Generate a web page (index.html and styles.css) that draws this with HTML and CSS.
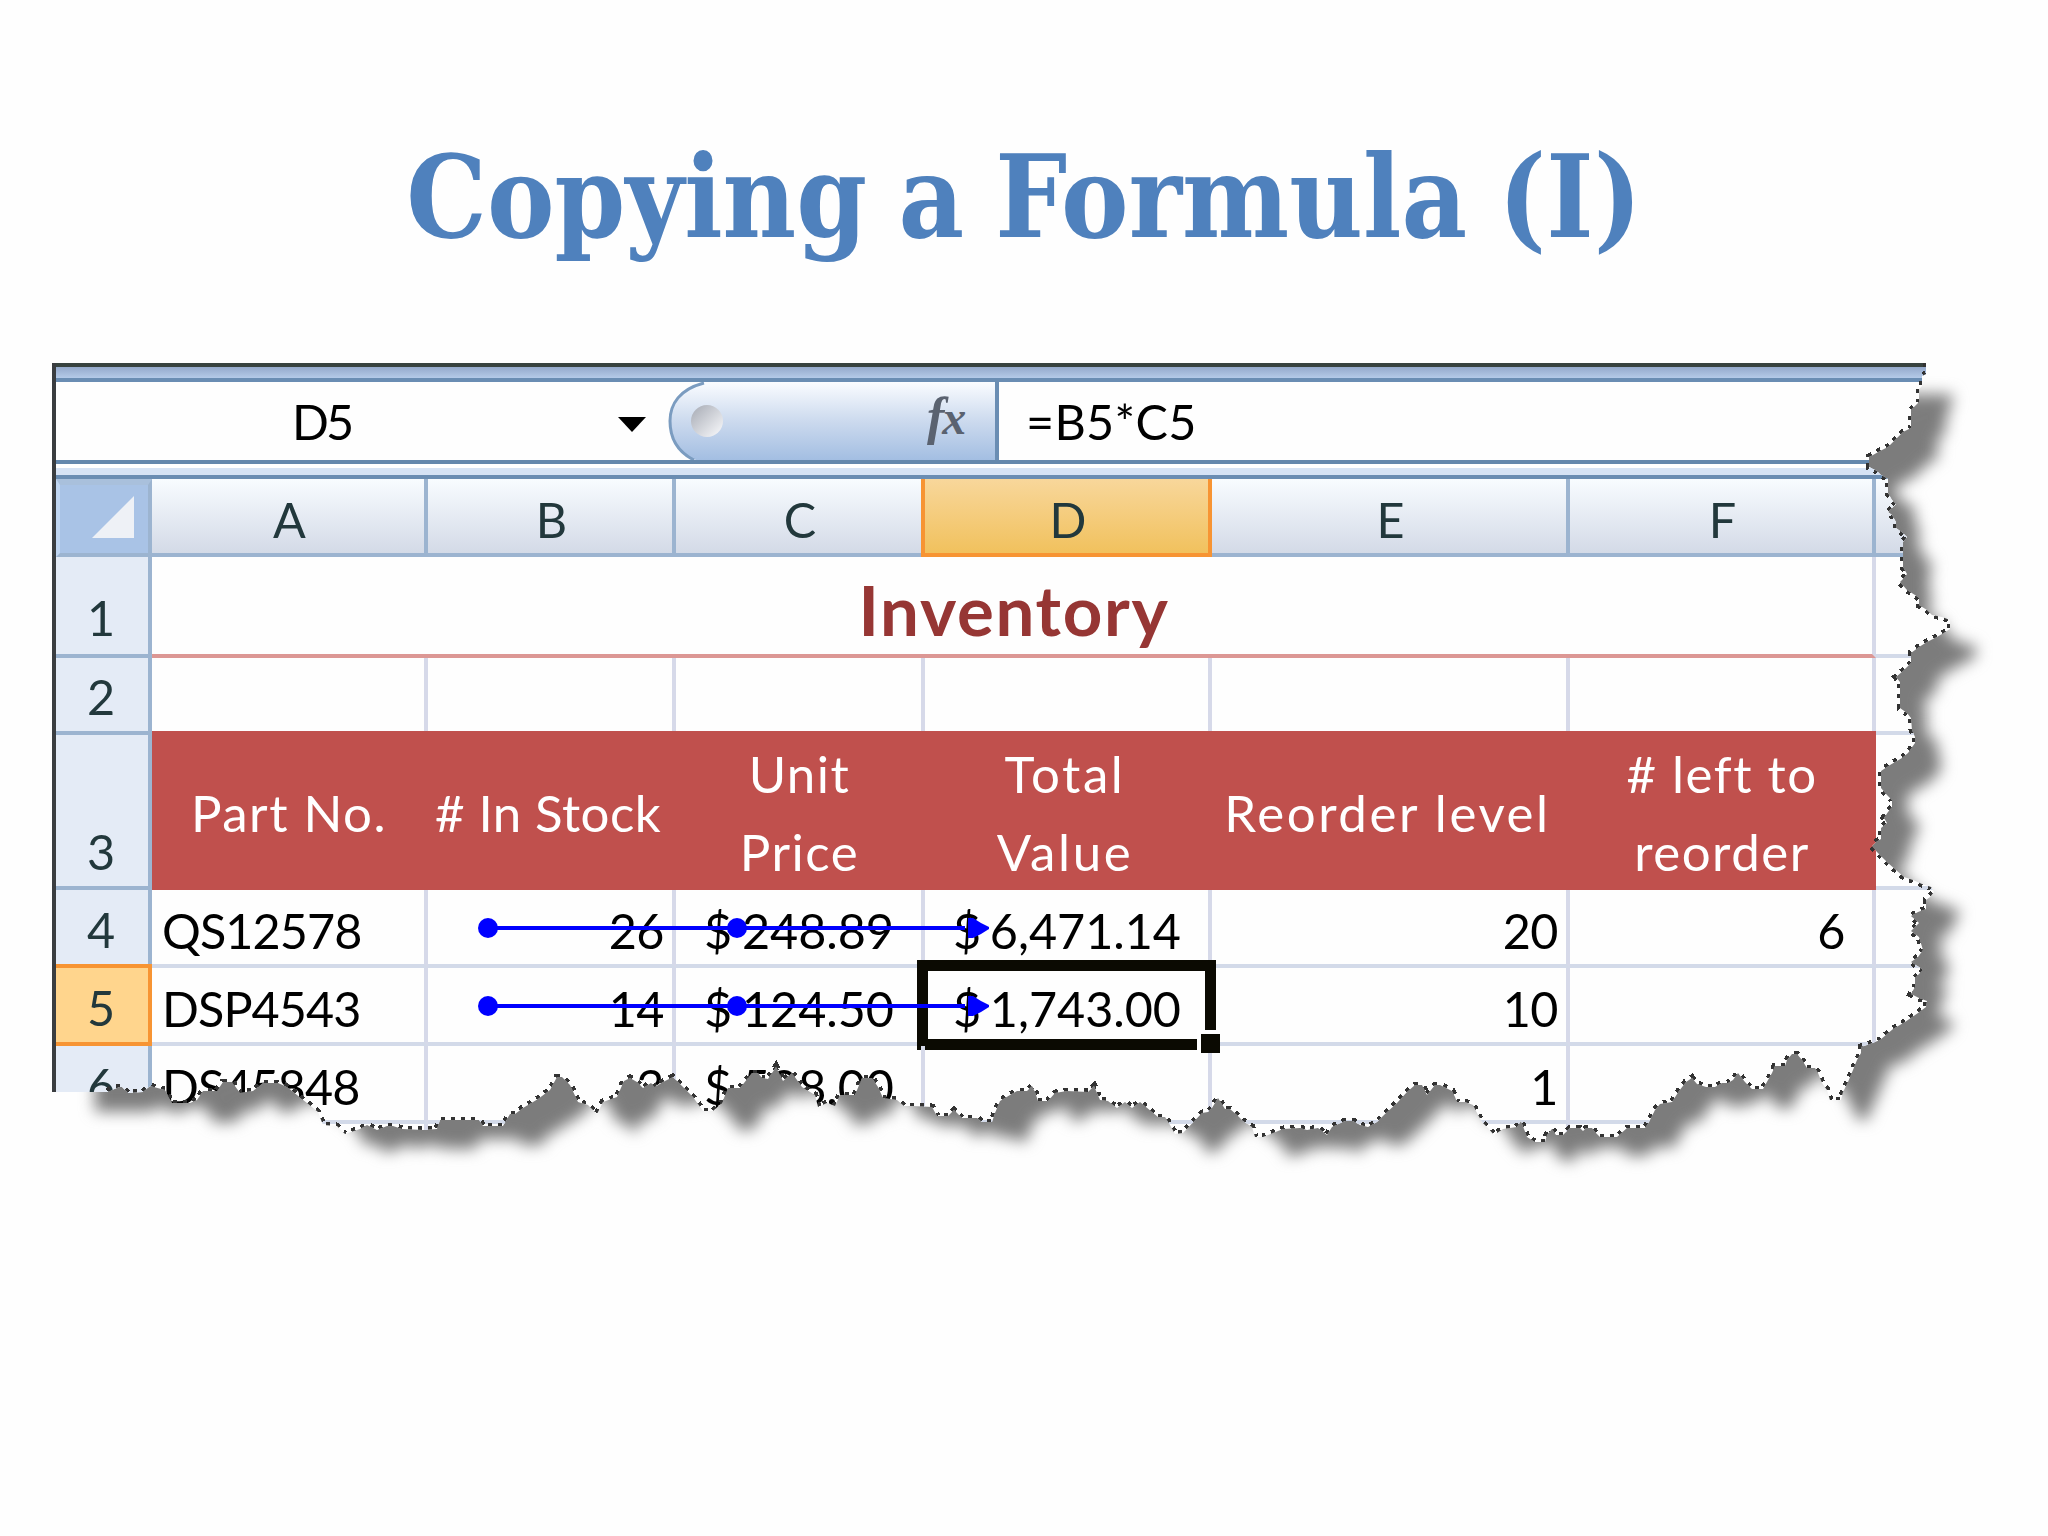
FILE: index.html
```html
<!DOCTYPE html>
<html lang="en">
<head>
  <meta charset="UTF-8">
  <title>Copying a Formula (I)</title>
  <link rel="stylesheet" href="styles.css">
</head>
<body>

  <h1 class="title"><span>Copying a Formula (I)</span></h1>

  <!-- torn paper outline, shared by the clip, the shadow and the dotted edge -->
  <svg class="defs" width="0" height="0">
    <defs>
      <path id="tear" d="M1926 363V374L1922 376V386L1919 389V402L1916 405L1911 410V428L1903 432L1896 439L1888 447L1880 451L1873 455L1869 457V467L1877 471L1881 475L1888 479V493L1892 500L1896 504L1892 508L1888 512L1892 515L1896 522V528L1903 533L1907 537L1903 542V567L1907 574L1904 578L1900 582L1907 590L1915 595L1919 598V605L1927 610L1932 615L1942 617L1950 620V629L1942 634L1935 638L1927 642L1919 647L1911 653V663L1903 671L1896 677L1900 682V708L1907 713L1911 718L1912 730L1915 737V743L1908 753L1902 758L1890 765L1881 771V788L1887 795L1892 800V807L1888 812L1884 818L1887 823L1881 828V839L1876 842L1872 846L1877 852L1888 863L1904 877L1913 880L1922 884L1931 887L1934 892L1930 897L1926 900V909L1918 912L1911 916L1919 923L1911 931L1919 937L1923 950L1918 957L1911 962L1919 967L1923 970L1915 978V987L1911 994L1919 998L1927 1001L1926 1007L1918 1013L1905 1022L1893 1029L1880 1040L1870 1044L1861 1047V1053L1857 1060L1853 1070L1848 1082L1843 1092L1841 1100H1830L1827 1090L1822 1083L1818 1073L1815 1068H1807L1802 1060L1797 1054H1792L1787 1060L1785 1066H1775L1772 1073L1768 1080L1763 1089H1752L1745 1082L1738 1073L1733 1080L1728 1083H1722L1715 1087H1706L1697 1084L1692 1078L1686 1082L1679 1091L1672 1102L1660 1104L1655 1110L1649 1122L1645 1128H1627L1617 1137H1600L1595 1132L1592 1128H1586L1583 1131L1580 1128H1570L1563 1135H1556L1552 1129L1547 1135L1545 1142H1535L1527 1137L1524 1129L1521 1121L1517 1127L1503 1129L1494 1135L1488 1128L1482 1122L1477 1113L1473 1105L1465 1102H1457L1455 1097L1452 1091L1440 1085H1435L1427 1095L1422 1085H1415L1407 1092L1397 1103L1385 1114L1377 1122L1368 1127L1360 1125L1353 1121H1345L1332 1127L1327 1135L1318 1128L1307 1130L1300 1128L1283 1129L1273 1133L1263 1137H1255L1252 1127L1243 1121L1237 1115L1230 1109H1225L1218 1098L1212 1108L1208 1112L1202 1113L1183 1133L1175 1134L1170 1125L1165 1117H1158L1152 1112L1140 1102L1132 1108L1125 1102L1117 1108L1108 1101L1100 1100L1094 1086L1088 1092L1067 1091L1055 1093L1048 1101H1038L1035 1092L1032 1086L1027 1091H1017L1010 1095L1000 1101L995 1113L992 1122H982L977 1118H962L954 1110L948 1116H937L932 1107L913 1106H904L897 1100L883 1098L878 1087L872 1078H862L855 1095H840L835 1106L827 1103L818 1107L815 1095L802 1087L792 1073L783 1081L776 1067L768 1079L762 1078L758 1073H752L740 1088H728L722 1103L713 1111H703L693 1097L683 1087L673 1077L663 1082L655 1087L651 1083L643 1088L637 1082L630 1078L624 1081L617 1097L603 1102L597 1114L588 1105L578 1102L570 1085L562 1077H557L550 1090L538 1099L523 1108L515 1114H510L503 1126H483L479 1120H440L437 1129L423 1130L402 1129L393 1126H387L377 1130L367 1125L360 1129L345 1134L337 1126L323 1125L318 1112L307 1103L297 1095L287 1087L278 1083H263L253 1091L240 1093L232 1082H223L217 1091H203L197 1100L190 1103H172L165 1090L150 1086L143 1092L128 1093L122 1087H113L107 1092"/>
      <path id="body" d="M107 1092H52V363H1926Z"/>
      <clipPath id="paper" clipPathUnits="userSpaceOnUse">
        <use href="#body" transform="translate(-52 -363)"/>
        <use href="#tear" transform="translate(-52 -363)"/>
      </clipPath>
    </defs>
  </svg>

  <div class="picture">
    <svg class="shadow" viewBox="52 363 1908 787">
      <g transform="translate(43.5 37) scale(0.991 0.984)">
        <use href="#body"/>
        <use href="#tear"/>
      </g>
    </svg>

    <div class="sheet">
      <div class="ribbon"></div>

      <div class="formula-bar">
        <div class="name-box"><span>D5</span><i class="arrow"></i></div>
        <div class="fx-box">
          <svg width="327" height="78" viewBox="0 0 327 78">
            <defs>
              <linearGradient id="pill" x1="0" y1="0" x2="0" y2="1">
                <stop offset="0" stop-color="#fafcff"/>
                <stop offset="0.5" stop-color="#ccdaee"/>
                <stop offset="1" stop-color="#a3bee2"/>
              </linearGradient>
              <linearGradient id="knob" x1="0" y1="0" x2="1" y2="1">
                <stop offset="0.1" stop-color="#aeb2bb"/>
                <stop offset="0.9" stop-color="#f2f3f6"/>
              </linearGradient>
            </defs>
            <path d="M327 0H38C12 4 2 20 2 39S12 74 28 78H327Z" fill="url(#pill)"/>
            <path d="M36 1C12 7 2 22 2 39S10 70 26 78" fill="none" stroke="#7b9cc0" stroke-width="3"/>
            <circle cx="39" cy="39" r="16" fill="url(#knob)"/>
          </svg>
          <span class="fx">f<small>x</small></span>
        </div>
        <div class="formula">=B5*C5</div>
      </div>

      <div class="gap"></div>

      <div class="grid">
        <div class="corner"><svg width="44" height="44"><path d="M43 1V43H1Z" fill="#eef1f6"/></svg></div>
        <div class="col">A</div>
        <div class="col">B</div>
        <div class="col">C</div>
        <div class="col active">D</div>
        <div class="col">E</div>
        <div class="col">F</div>
        <div class="col"></div>

        <div class="row first">1</div>
        <div class="cell merged">Inventory</div>
        <div class="cell"></div>

        <div class="row">2</div>
        <div class="cell blank"></div>
        <div class="cell blank"></div>
        <div class="cell blank"></div>
        <div class="cell blank"></div>
        <div class="cell blank"></div>
        <div class="cell blank"></div>
        <div class="cell"></div>

        <div class="row">3</div>
        <div class="cell head">Part No.</div>
        <div class="cell head stock">#&nbsp;In Stock</div>
        <div class="cell head">Unit<br>Price</div>
        <div class="cell head wide">Total<br>Value</div>
        <div class="cell head wide">Reorder level</div>
        <div class="cell head">#&nbsp;left to<br>reorder</div>
        <div class="cell"></div>

        <div class="row">4</div>
        <div class="cell code">QS12578</div>
        <div class="cell num">26</div>
        <div class="cell money"><span>$</span><span>248.89</span></div>
        <div class="cell money"><span>$</span><span>6,471.14</span></div>
        <div class="cell num">20</div>
        <div class="cell num last">6</div>
        <div class="cell"></div>

        <div class="row active">5</div>
        <div class="cell code">DSP4543</div>
        <div class="cell num">14</div>
        <div class="cell money"><span>$</span><span>124.50</span></div>
        <div class="cell money selected"><span>$</span><span>1,743.00</span></div>
        <div class="cell num">10</div>
        <div class="cell"></div>
        <div class="cell"></div>

        <div class="row">6</div>
        <div class="cell code">DS45848</div>
        <div class="cell num">3</div>
        <div class="cell money"><span>$</span><span>598.00</span></div>
        <div class="cell"></div>
        <div class="cell num">1</div>
        <div class="cell"></div>
        <div class="cell"></div>

        <div class="row"></div>
        <div class="cell"></div>
        <div class="cell"></div>
        <div class="cell"></div>
        <div class="cell"></div>
        <div class="cell"></div>
        <div class="cell"></div>
        <div class="cell"></div>
      </div>

      <!-- precedent arrows, selection handle and torn edge -->
      <svg class="overlay" viewBox="52 363 1908 787">
        <g id="trace" fill="#00f">
          <path d="M488 926H965V930H488Z"/>
          <circle cx="488" cy="928" r="10"/>
          <circle cx="737" cy="928" r="10"/>
          <path d="M968 918H973L981 923L989 927V929L981 934L973 938H968Z"/>
        </g>
        <use href="#trace" y="78"/>
        <path d="M1197 1030H1220V1053H1197Z" fill="#fff"/>
        <path d="M1201 1034H1220V1053H1201Z" fill="#0b0a02"/>
        <use href="#tear" class="edge"/>
      </svg>
    </div>
  </div>

</body>
</html>
```
FILE: styles.css
```css
* {
  box-sizing: border-box;
}

body {
  background-color: #fefefe;
  font-family: Lato, "Liberation Sans", sans-serif;
  margin: 0;
  width: 2048px;
  height: 1536px;
  overflow: hidden;
}

.title {
  margin: 0;
  height: 363px;
  padding-top: 130px;
  text-align: center;
  font-family: "DejaVu Serif Condensed", "DejaVu Serif", serif;
  font-stretch: condensed;
  font-weight: bold;
  font-size: 115px;
  line-height: 134px;
  color: #4f81bd;
  white-space: nowrap;
}

.title span {
  display: inline-block;
  word-spacing: -4px;
  transform: scaleX(0.979);
}

.defs {
  position: absolute;
}

.picture {
  position: relative;
  width: 1908px;
  margin-left: 52px;
}

.shadow {
  position: absolute;
  left: 0;
  top: 0;
  width: 1908px;
  height: 787px;
  overflow: visible;
  fill: #7c7c7c;
  filter: blur(7.5px);
}

.sheet {
  position: relative;
  height: 787px;
  background-color: #fefefe;
  border-left: 4px solid #3a3d40;
  clip-path: url(#paper);
  font-size: 48.5px;
  line-height: 78px;
  color: #000;
}

.ribbon {
  height: 19px;
  border-top: 4px solid #37423f;
  border-bottom: 4px solid #6a8db3;
  background: linear-gradient(#94a9cb, #b4cae8);
}

.formula-bar {
  display: flex;
  height: 82px;
  border-bottom: 4px solid #6488ad;
}

.name-box {
  display: flex;
  align-items: center;
  justify-content: space-between;
  width: 612px;
  padding: 0 22px 0 236px;
  letter-spacing: -3px;
}

.arrow {
  border: 14px solid transparent;
  border-top: 15px solid #000;
  border-bottom: 0;
  margin-top: 6px;
}

.fx-box {
  position: relative;
  width: 331px;
  border-right: 4px solid #6a8db3;
}

.fx-box svg {
  display: block;
}

.fx {
  position: absolute;
  left: 259px;
  top: -4px;
  font-family: "Liberation Serif", serif;
  font-style: italic;
  font-weight: bold;
  font-size: 52px;
  color: #5a6270;
}

.fx small {
  font-size: 48px;
  margin-left: -2px;
}

.formula {
  padding: 0 0 0 27px;
  letter-spacing: 0.3px;
}

.gap {
  height: 15px;
  background-color: #d6e3f5;
  border-top: 4px solid #fff;
  border-bottom: 4px solid #6a8db3;
}

.grid {
  display: grid;
  grid-template-columns: 96px 276px 248px 249px 287px 358px 306px 84px;
  grid-template-rows: 78px 101px 77px 155px 78px 78px 78px 40px;
}

.corner {
  background-color: #a9c3e6;
  border: 4px solid #c0d6f2;
  border-top: 6px solid #a9c0dc;
  border-right: 4px solid #9cb4d0;
  border-bottom: 4px solid #9cb4d0;
  padding: 10px 0 0 31px;
}

.corner svg {
  display: block;
}

.col {
  padding: 1px 0 0 3px;
  text-align: center;
  color: #22383c;
  background: linear-gradient(#f8fcff, #d3dae7);
  border-right: 4px solid #9cb4d0;
  border-bottom: 4px solid #9cb4d0;
}

.col.active {
  background: linear-gradient(#f8d79b, #f1c15d);
  border-color: #f79433;
  border-left: 4px solid #f79433;
  margin-left: -4px;
}

.row {
  display: flex;
  align-items: flex-end;
  justify-content: center;
  padding-right: 2px;
  color: #22383c;
  background-color: #e4ebf6;
  border-right: 4px solid #9cb4d0;
  border-bottom: 4px solid #9cb4d0;
  line-height: 69px;
}

.row.first {
  line-height: 73px;
}

.row.active {
  background-color: #ffd58d;
  border-color: #f79433;
  border-top: 4px solid #f79433;
  margin-top: -4px;
}

.cell {
  padding: 1px 10px 0;
  border-right: 4px solid #d6d9e9;
  border-bottom: 4px solid #d3dae9;
  white-space: nowrap;
}

.cell.code {
  letter-spacing: -0.9px;
}

.cell.merged {
  grid-column: span 6;
  padding-top: 14px;
  padding-left: 14px;
  text-align: center;
  font-size: 69px;
  font-weight: bold;
  letter-spacing: 1.7px;
  color: #963634;
  border-bottom-color: #dc9794;
}

.cell.blank {
  border-bottom: 0;
}

.cell.head {
  display: flex;
  align-items: center;
  justify-content: center;
  margin-top: -4px;
  padding: 5px 2px 0 0;
  text-align: center;
  font-size: 51px;
  letter-spacing: 1.5px;
  color: #fff;
  background-color: #c0504d;
  border: 0;
}

.cell.head.stock {
  padding-right: 8px;
  letter-spacing: 0.4px;
}

.cell.head.wide {
  padding-right: 7px;
  letter-spacing: 2.6px;
}

.cell.num {
  text-align: right;
  padding-right: 8px;
  letter-spacing: -0.5px;
}

.cell.num.last {
  padding-right: 27px;
}

.cell.money {
  display: flex;
  justify-content: space-between;
  padding: 1px 27px 0 28px;
}

.cell.selected {
  outline: 11px solid #0b0a02;
  outline-offset: -7px;
  margin: -4px 0 0 -4px;
  padding: 5px 27px 0 32px;
}

.overlay {
  position: absolute;
  left: -4px;
  top: 0;
  width: 1908px;
  height: 787px;
}

.edge {
  fill: none;
  stroke: #333;
  stroke-width: 7px;
  stroke-dasharray: 4 6;
  shape-rendering: crispEdges;
}
```
